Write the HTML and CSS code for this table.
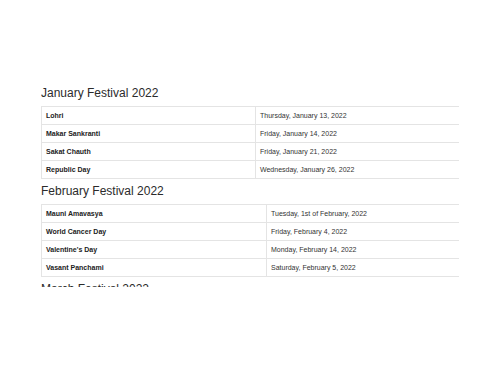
FILE: index.html
```html
<!DOCTYPE html>
<html lang="en">
<head>
<meta charset="utf-8">
<title>Festivals 2022</title>
<link rel="stylesheet" href="styles.css">
</head>
<body>
<div class="clip">
  <section class="month">
    <h3 class="month-title">January Festival 2022</h3>
    <table class="fest jan">
      <tr><td class="name">Lohri</td><td class="date">Thursday, January 13, 2022</td></tr>
      <tr><td class="name">Makar Sankranti</td><td class="date">Friday, January 14, 2022</td></tr>
      <tr><td class="name">Sakat Chauth</td><td class="date">Friday, January 21, 2022</td></tr>
      <tr><td class="name">Republic Day</td><td class="date">Wednesday, January 26, 2022</td></tr>
    </table>
  </section>
  <section class="month">
    <h3 class="month-title">February Festival 2022</h3>
    <table class="fest feb">
      <tr><td class="name">Mauni Amavasya</td><td class="date">Tuesday, 1st of February, 2022</td></tr>
      <tr><td class="name">World Cancer Day</td><td class="date">Friday, February 4, 2022</td></tr>
      <tr><td class="name">Valentine's Day</td><td class="date">Monday, February 14, 2022</td></tr>
      <tr><td class="name">Vasant Panchami</td><td class="date">Saturday, February 5, 2022</td></tr>
    </table>
  </section>
  <section class="month">
    <h3 class="month-title">March Festival 2022</h3>
  </section>
</div>
</body>
</html>
```

FILE: styles.css
```css
html, body {
  margin: 0;
  padding: 0;
  background: #fff;
}
body {
  font-family: "Liberation Sans", Arial, sans-serif;
  color: #333;
}
.clip {
  box-sizing: border-box;
  margin-left: 41px;
  width: 418px;
  height: 287px;
  padding-top: 87px;
  overflow: hidden;
}
.month-title {
  margin: 0 0 6px 0;
  font-size: 12px;
  line-height: 13.2px;
  font-weight: normal;
  color: #2b2b2b;
}
.fest {
  width: 419px;
  border-collapse: collapse;
  table-layout: fixed;
  margin-bottom: 6px;
  font-size: 7px;
  line-height: 9px;
}
.fest td {
  border: 1px solid #e4e4e4;
  padding: 4px 4px;
  white-space: nowrap;
  vertical-align: middle;
}
.fest .name {
  font-weight: bold;
  color: #222;
}
.fest .date {
  color: #333;
}
.jan .name { width: 205px; }
.feb .name { width: 216px; }
```
